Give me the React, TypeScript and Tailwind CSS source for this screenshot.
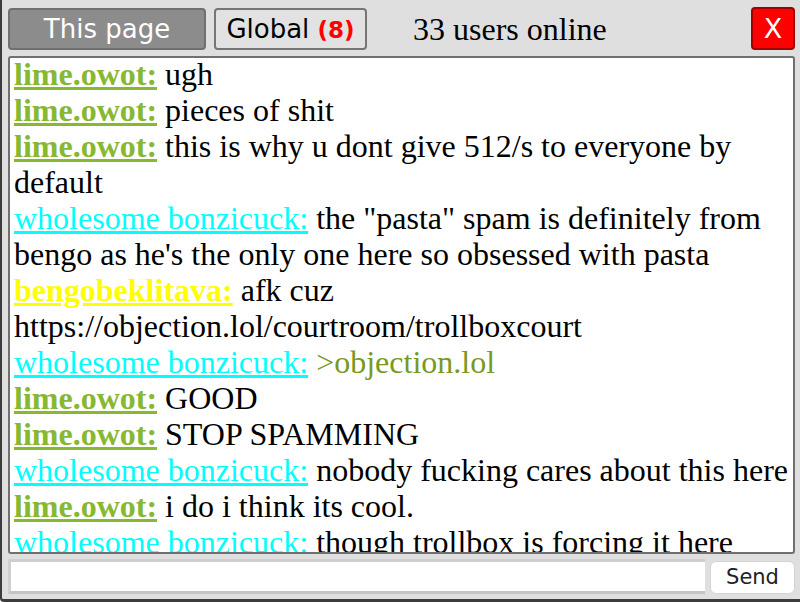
const lines: { name: string; color: string; bold?: boolean; text: string; green?: boolean }[] = [
  { name: "lime.owot:", color: "text-[#87b832]", bold: true, text: "ugh" },
  { name: "lime.owot:", color: "text-[#87b832]", bold: true, text: "pieces of shit" },
  { name: "lime.owot:", color: "text-[#87b832]", bold: true, text: "this is why u dont give 512/s to everyone by default" },
  { name: "wholesome bonzicuck:", color: "text-[#00ffff]", text: 'the "pasta" spam is definitely from bengo as he\'s the only one here so obsessed with pasta' },
  { name: "bengobeklitava:", color: "text-[#ffff00]", bold: true, text: "afk cuz https://objection.lol/courtroom/trollboxcourt" },
  { name: "wholesome bonzicuck:", color: "text-[#00ffff]", text: ">objection.lol", green: true },
  { name: "lime.owot:", color: "text-[#87b832]", bold: true, text: "GOOD" },
  { name: "lime.owot:", color: "text-[#87b832]", bold: true, text: "STOP SPAMMING" },
  { name: "wholesome bonzicuck:", color: "text-[#00ffff]", text: "nobody fucking cares about this here" },
  { name: "lime.owot:", color: "text-[#87b832]", bold: true, text: "i do i think its cool." },
  { name: "wholesome bonzicuck:", color: "text-[#00ffff]", text: "though trollbox is forcing it here" },
];

export default function App() {
  return (
    <div className="w-[800px] h-[602px] bg-[#dfdfdf] border-l-2 border-b-[3px] border-[#3c3c3c] rounded-bl-[4px] flex flex-col pl-[6px] pr-[5px] overflow-hidden">
      <div className="flex items-center h-[56px] pt-[1px] gap-2">
        <button className="w-[198px] h-[42px] bg-[#8c8c8c] border-2 border-[#707070] rounded-[4px] text-white text-[26px] font-['DejaVu_Sans',sans-serif]">
          This page
        </button>
        <button className="w-[153px] h-[42px] bg-[#e2e2e2] border-2 border-[#757575] rounded-[4px] text-black text-[26px] font-['DejaVu_Sans',sans-serif]">
          Global <span className="text-[#ff0000] font-bold text-[23px]">(8)</span>
        </button>
        <span className="ml-[38px] text-[32px] text-black font-['Liberation_Serif',serif]">33 users online</span>
        <button className="ml-auto w-[44px] h-[43px] bg-[#ff0000] border-2 border-[#a00000] rounded-[4px] text-white text-[27px] leading-none font-['DejaVu_Sans',sans-serif]">
          X
        </button>
      </div>
      <div className="h-[498px] bg-white border-2 border-[#707070] rounded-[3px] px-[4px] overflow-hidden font-['Liberation_Serif',serif] text-[32px] leading-[36px] text-black">
        <div className="-mt-[2px]">
          {lines.map((l, i) => (
            <div key={i}>
              <a className={`${l.color} underline ${l.bold ? "font-bold" : ""}`}>{l.name}</a>{" "}
              <span className={l.green ? "text-[#789922]" : ""}>{l.text}</span>
            </div>
          ))}
        </div>
      </div>
      <div className="flex items-center gap-[5px] mt-[5px]">
        <input className="w-[697px] h-[35px] bg-white border-t-[3px] border-l-[3px] border-b-[3px] border-t-[#cfcfcf] border-l-[#cfcfcf] border-b-[#c4c4c4] border-r-0 outline-none" />
        <button className="w-[85px] h-[33px] mt-[2px] bg-white rounded-[6px] border border-[#d4d4d4] text-[21px] text-[#222] font-['DejaVu_Sans',sans-serif]">
          Send
        </button>
      </div>
    </div>
  );
}
